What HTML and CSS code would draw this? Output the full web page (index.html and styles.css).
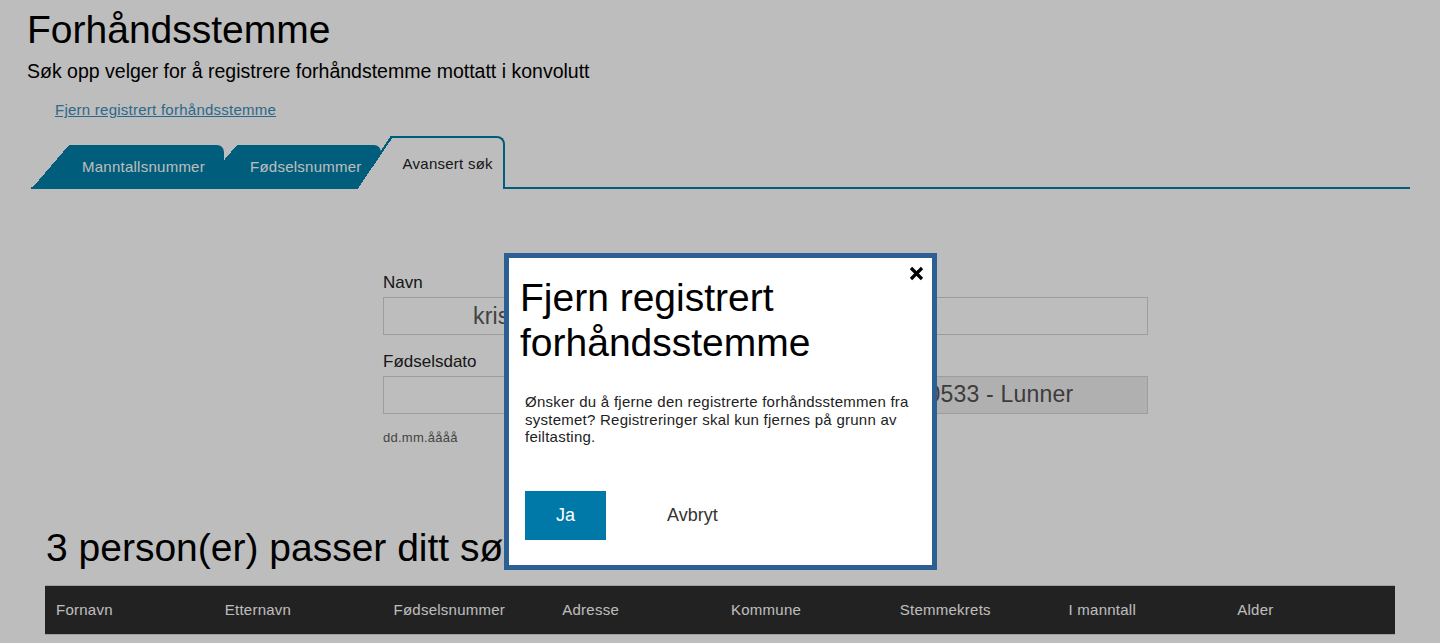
FILE: index.html
```html
<!DOCTYPE html>
<html lang="no">
<head>
<meta charset="utf-8">
<title>Forhåndsstemme</title>
<link rel="stylesheet" href="styles.css">
</head>
<body>
<div class="page">
  <header class="page-head">
    <h1 class="page-title">Forhåndsstemme</h1>
    <p class="page-lead">Søk opp velger for å registrere forhåndstemme mottatt i konvolutt</p>
    <a class="remove-link" href="#">Fjern registrert forhåndsstemme</a>
  </header>

  <nav class="tabs">
    <a class="tab" href="#"><span class="tab-slant"></span><span class="tab-body">Manntallsnummer</span></a>
    <a class="tab tab--second" href="#"><span class="tab-slant"></span><span class="tab-body">Fødselsnummer</span></a>
    <a class="tab tab--active" href="#"><span class="tab-slant"></span><span class="tab-body">Avansert søk</span></a>
  </nav>

  <form class="search-form">
    <div class="field">
      <label class="field-label">Navn</label>
      <input class="field-input field-input--name" type="text" value="kristin">
    </div>
    <div class="field">
      <span class="field-label field-label--hidden" aria-hidden="true"></span>
      <input class="field-input" type="text" value="" aria-label="Adresse">
    </div>
    <div class="field">
      <label class="field-label">Fødselsdato</label>
      <input class="field-input" type="text" value="">
      <span class="field-hint">dd.mm.åååå</span>
    </div>
    <div class="field">
      <span class="field-label field-label--hidden" aria-hidden="true"></span>
      <input class="field-input field-input--disabled" type="text" value="0533 - Lunner" aria-label="Kommune" disabled>
    </div>
  </form>

  <section class="results">
    <h2 class="results-title">3 person(er) passer ditt søk</h2>
    <div class="results-head">
      <span class="results-col">Fornavn</span>
      <span class="results-col">Etternavn</span>
      <span class="results-col">Fødselsnummer</span>
      <span class="results-col">Adresse</span>
      <span class="results-col">Kommune</span>
      <span class="results-col">Stemmekrets</span>
      <span class="results-col">I manntall</span>
      <span class="results-col">Alder</span>
    </div>
  </section>
</div>

<div class="backdrop"></div>

<div class="modal" role="dialog" aria-labelledby="modal-title">
  <button class="modal-close" type="button" aria-label="Lukk">
    <svg width="15" height="15" viewBox="0 0 15 15"><path d="M2 2 L13 13 M13 2 L2 13" stroke="#000" stroke-width="3.2" fill="none"/></svg>
  </button>
  <h2 class="modal-title" id="modal-title">Fjern registrert forhåndsstemme</h2>
  <p class="modal-text">Ønsker du å fjerne den registrerte forhåndsstemmen fra systemet? Registreringer skal kun fjernes på grunn av feiltasting.</p>
  <div class="modal-actions">
    <button class="btn btn--primary" type="button">Ja</button>
    <button class="btn btn--plain" type="button">Avbryt</button>
  </div>
</div>
</body>
</html>
```
FILE: styles.css
```css
html {
  overflow: hidden;
}

body {
  margin: 0;
  background: #fff;
  color: #000;
  font-family: "Liberation Sans", Arial, sans-serif;
  font-size: 15px;
  letter-spacing: 0.25px;
}

.page-head {
  padding-left: 27px;
}

.page-title {
  margin: 8px 0 0;
  font-size: 39px;
  font-weight: normal;
  line-height: normal;
  letter-spacing: 0;
}

.page-lead {
  margin: 8px 0 0;
  font-size: 19.5px;
  line-height: normal;
  letter-spacing: 0;
}

.remove-link {
  display: inline-block;
  margin: 18px 0 0 28px;
  color: #3a8dbb;
  text-decoration: underline;
  line-height: normal;
}

/* tabs */
.tabs {
  display: flex;
  align-items: flex-end;
  height: 51px;
  margin: 17.5px 30px 0 31px;
  border-bottom: 2px solid #007ea6;
}

.tab {
  display: flex;
  height: 42px;
  color: #fff;
  text-decoration: none;
  margin-left: 2px;
}

.tab--second {
  margin-left: -23px;
}

.tab-slant {
  flex: none;
  width: 36px;
  background: linear-gradient(to top left, #007ea6 50%, transparent 50%);
}

.tab-body {
  padding: 13px 19px 0 13px;
  background: #007ea6;
  border-top-right-radius: 7px;
  line-height: normal;
  white-space: nowrap;
}

.tab--active {
  height: 53px;
  margin-left: -25px;
  margin-bottom: -2px;
  color: #222;
}

.tab--active .tab-slant {
  background: linear-gradient(to top left,
    #fff calc(50% - 1.3px),
    #007ea6 calc(50% - 1.3px),
    #007ea6 calc(50% + 1.1px),
    transparent calc(50% + 1.1px));
}

.tab--active .tab-body {
  padding: 17px 10px 0 11px;
  background: #fff;
  border-top: 2px solid #007ea6;
  border-right: 2px solid #007ea6;
  border-top-right-radius: 8px;
}

/* search form */
.search-form {
  display: grid;
  grid-template-columns: 1fr 1fr;
  column-gap: 30px;
  row-gap: 16.4px;
  width: 765px;
  margin: 84px 0 0 383px;
}

.field {
  display: flex;
  flex-direction: column;
  align-items: flex-start;
}

.field-label {
  font-size: 17px;
  line-height: normal;
  letter-spacing: 0;
  color: #222;
  margin-bottom: 4.8px;
}

.field-label--hidden {
  height: 19.5px;
}

.field-input {
  box-sizing: border-box;
  width: 100%;
  height: 38px;
  margin: 0;
  padding: 0 10px;
  border: 1px solid #d4d4d4;
  background: #fff;
  font-family: "Liberation Sans", Arial, sans-serif;
  font-size: 23px;
  letter-spacing: 0.2px;
  color: #5a5a5a;
}

.field-input--name {
  padding-left: 89px;
}

.field-input--disabled {
  background: #eee;
  color: #525252;
  padding-left: 146px;
}

.field-hint {
  margin-top: 16px;
  font-size: 13px;
  line-height: normal;
  color: #5c5c5c;
}

/* results */
.results {
  margin: 81px 45px 0;
}

.results-title {
  margin: 0 0 0 1px;
  font-size: 39px;
  font-weight: normal;
  line-height: normal;
  letter-spacing: 0;
}

.results-head {
  box-sizing: border-box;
  display: grid;
  grid-template-columns: repeat(8, 1fr);
  align-items: center;
  height: 50px;
  margin-top: 14.2px;
  background: #2e2e2e;
  border-top: 1px solid #d8d8d8;
  border-bottom: 1px solid #d8d8d8;
  color: #fff;
}

.results-col {
  padding-left: 11px;
}

/* modal */
.backdrop {
  position: fixed;
  inset: 0;
  background: rgba(0, 0, 0, 0.26);
}

.modal {
  position: fixed;
  left: 504px;
  top: 253px;
  box-sizing: border-box;
  width: 433px;
  padding: 17px 16px 25px;
  border: 5px solid #2c6094;
  background: #fff;
}

.modal-close {
  position: absolute;
  top: 8px;
  right: 8px;
  width: 15px;
  height: 15px;
  padding: 0;
  border: 0;
  background: none;
  cursor: pointer;
}

.modal-close svg {
  display: block;
}

.modal-title {
  margin: 0 0 0 -5px;
  font-size: 39px;
  font-weight: normal;
  line-height: 45px;
  letter-spacing: 0;
  color: #000;
}

.modal-text {
  margin: 28px 0 0;
  line-height: 17.5px;
  color: #222;
}

.modal-actions {
  display: flex;
  gap: 30px;
  margin-top: 45.4px;
}

.btn {
  height: 49px;
  padding: 0 31px;
  border: 0;
  font-family: "Liberation Sans", Arial, sans-serif;
  font-size: 18px;
  letter-spacing: 0;
  cursor: pointer;
}

.btn--primary {
  background: #0079a8;
  color: #fff;
}

.btn--plain {
  background: transparent;
  color: #333;
}
```
